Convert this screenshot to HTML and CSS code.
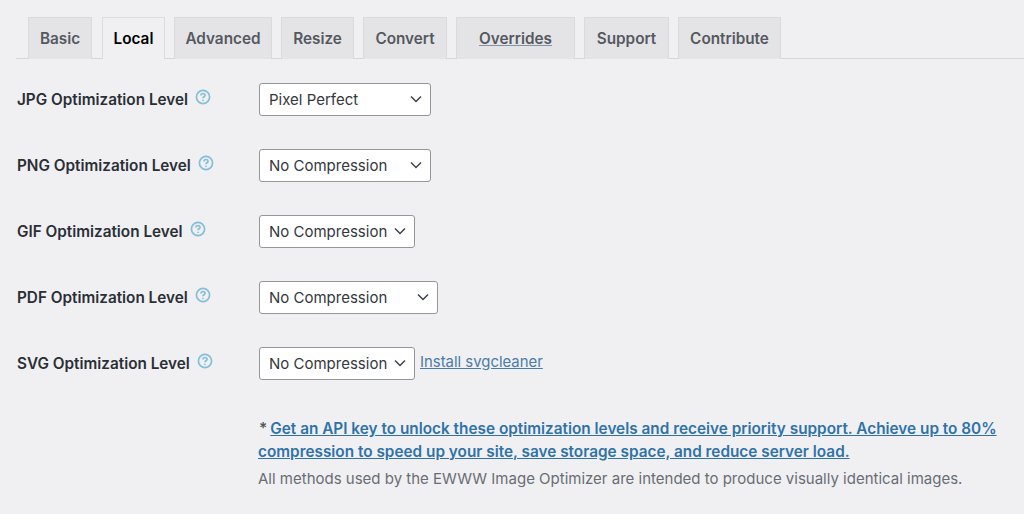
FILE: index.html
```html
<!DOCTYPE html>
<html lang="en">
<head>
<meta charset="utf-8">
<title>EWWW Image Optimizer settings</title>
<link rel="stylesheet" href="styles.css">
</head>
<body>
<nav class="tabs">
  <a class="tab t-basic">Basic</a>
  <a class="tab t-local active">Local</a>
  <a class="tab t-advanced">Advanced</a>
  <a class="tab t-resize">Resize</a>
  <a class="tab t-convert">Convert</a>
  <a class="tab t-overrides link">Overrides</a>
  <a class="tab t-support">Support</a>
  <a class="tab t-contribute">Contribute</a>
</nav>
<main class="settings">
  <div class="row">
    <div class="label"><span>JPG Optimization Level</span><svg class="help" viewBox="0 0 16 16"><circle cx="8" cy="8" r="6.6"/><path d="M6 6.4c0-1.2 1-1.9 2-1.9s2 .7 2 1.8c0 1.5-2 1.5-2 3"/><path d="M8 10.8v1.2"/></svg></div>
    <div class="select w172"><span>Pixel Perfect</span><svg class="chev" viewBox="0 0 12 8"><path d="M1 1.5l5 5 5-5"/></svg></div>
  </div>
  <div class="row">
    <div class="label"><span>PNG Optimization Level</span><svg class="help" viewBox="0 0 16 16"><circle cx="8" cy="8" r="6.6"/><path d="M6 6.4c0-1.2 1-1.9 2-1.9s2 .7 2 1.8c0 1.5-2 1.5-2 3"/><path d="M8 10.8v1.2"/></svg></div>
    <div class="select w172"><span>No Compression</span><svg class="chev" viewBox="0 0 12 8"><path d="M1 1.5l5 5 5-5"/></svg></div>
  </div>
  <div class="row">
    <div class="label"><span>GIF Optimization Level</span><svg class="help" viewBox="0 0 16 16"><circle cx="8" cy="8" r="6.6"/><path d="M6 6.4c0-1.2 1-1.9 2-1.9s2 .7 2 1.8c0 1.5-2 1.5-2 3"/><path d="M8 10.8v1.2"/></svg></div>
    <div class="select w156"><span>No Compression</span><svg class="chev" viewBox="0 0 12 8"><path d="M1 1.5l5 5 5-5"/></svg></div>
  </div>
  <div class="row">
    <div class="label"><span>PDF Optimization Level</span><svg class="help" viewBox="0 0 16 16"><circle cx="8" cy="8" r="6.6"/><path d="M6 6.4c0-1.2 1-1.9 2-1.9s2 .7 2 1.8c0 1.5-2 1.5-2 3"/><path d="M8 10.8v1.2"/></svg></div>
    <div class="select w179"><span>No Compression</span><svg class="chev" viewBox="0 0 12 8"><path d="M1 1.5l5 5 5-5"/></svg></div>
  </div>
  <div class="row">
    <div class="label"><span>SVG Optimization Level</span><svg class="help" viewBox="0 0 16 16"><circle cx="8" cy="8" r="6.6"/><path d="M6 6.4c0-1.2 1-1.9 2-1.9s2 .7 2 1.8c0 1.5-2 1.5-2 3"/><path d="M8 10.8v1.2"/></svg></div>
    <div class="select w156"><span>No Compression</span><svg class="chev" viewBox="0 0 12 8"><path d="M1 1.5l5 5 5-5"/></svg></div>
    <a class="install">Install svgcleaner</a>
  </div>
  <div class="notes">
    <p class="promo"><span class="star">*</span><a>Get an API key to unlock these optimization levels and receive priority support. Achieve up to 80% compression to speed up your site, save storage space, and reduce server load.</a></p>
    <p class="desc">All methods used by the EWWW Image Optimizer are intended to produce visually identical images.</p>
  </div>
</main>
</body>
</html>
```
FILE: styles.css
```css
* { box-sizing: border-box; }
html, body { margin: 0; height: 514px; overflow: hidden; }
body {
  background: #f0f0f3;
  color: #2c3338;
  font-family: Inter, "Liberation Sans", sans-serif;
  font-size: 15.3px;
}
.tabs {
  display: flex;
  gap: 9px;
  height: 59px;
  margin-left: 16px;
  padding: 17px 0 0 12px;
  border-bottom: 1px solid #d6d6d9;
}
.tab {
  height: 42px;
  padding-top: 11px;
  text-align: center;
  background: #e4e4e6;
  border: 1px solid #dadadc;
  border-bottom: 0;
  color: #55595f;
  font-weight: 600;
  font-size: 15.3px;
}
.tab.active { background: #f0f0f3; color: #000; border-color: #dcdcdf; }
.tab.link { text-decoration: underline; text-decoration-color: #7f93ad; }
.t-basic { width: 64px; }
.t-local { width: 63px; margin-left: 1px; }
.t-advanced { width: 98px; }
.t-resize { width: 73px; }
.t-convert { width: 84px; }
.t-overrides { width: 119px; }
.t-support { width: 85px; }
.t-contribute { width: 103px; }
.settings { padding: 24px 0 0 17px; }
.row {
  display: flex;
  align-items: flex-start;
  height: 66px;
}
.label {
  width: 242px;
  display: flex;
  align-items: flex-start;
  padding-top: 8px;
  gap: 7px;
  font-weight: 600;
  line-height: 18px;
  color: #2a2f35;
}
.help {
  width: 16px;
  height: 16px;
  margin-top: -2px;
  fill: none;
  stroke: #84bfd6;
  stroke-width: 1.7;
}
.select {
  height: 33px;
  display: flex;
  align-items: center;
  justify-content: space-between;
  padding: 0 8px 1px 9px;
  background: #fff;
  border: 1px solid #95979b;
  border-radius: 3px;
  color: #33383d;
  font-size: 15px;
}
.w172 { width: 172px; }
.w156 { width: 156px; }
.w179 { width: 179px; }
.chev {
  width: 12px;
  height: 8px;
  fill: none;
  stroke: #3c434a;
  stroke-width: 1.5;
}
.install {
  margin: 5px 0 0 5px;
  color: #4a7ca6;
  text-decoration: underline;
  line-height: 20px;
  font-size: 14.9px;
}
.notes { margin: 4px 0 0 241px; }
.promo {
  margin: 0;
  width: 750px;
  line-height: 23px;
  font-weight: 600;
  font-size: 15.35px;
  color: #50575e;
}
.star { margin: 0 3px 0 1px; }
.promo a { color: #2f72a8; text-decoration: underline; }
.desc {
  margin: 6px 0 0;
  color: #696d73;
  line-height: 20px;
  font-size: 15px;
}
```
